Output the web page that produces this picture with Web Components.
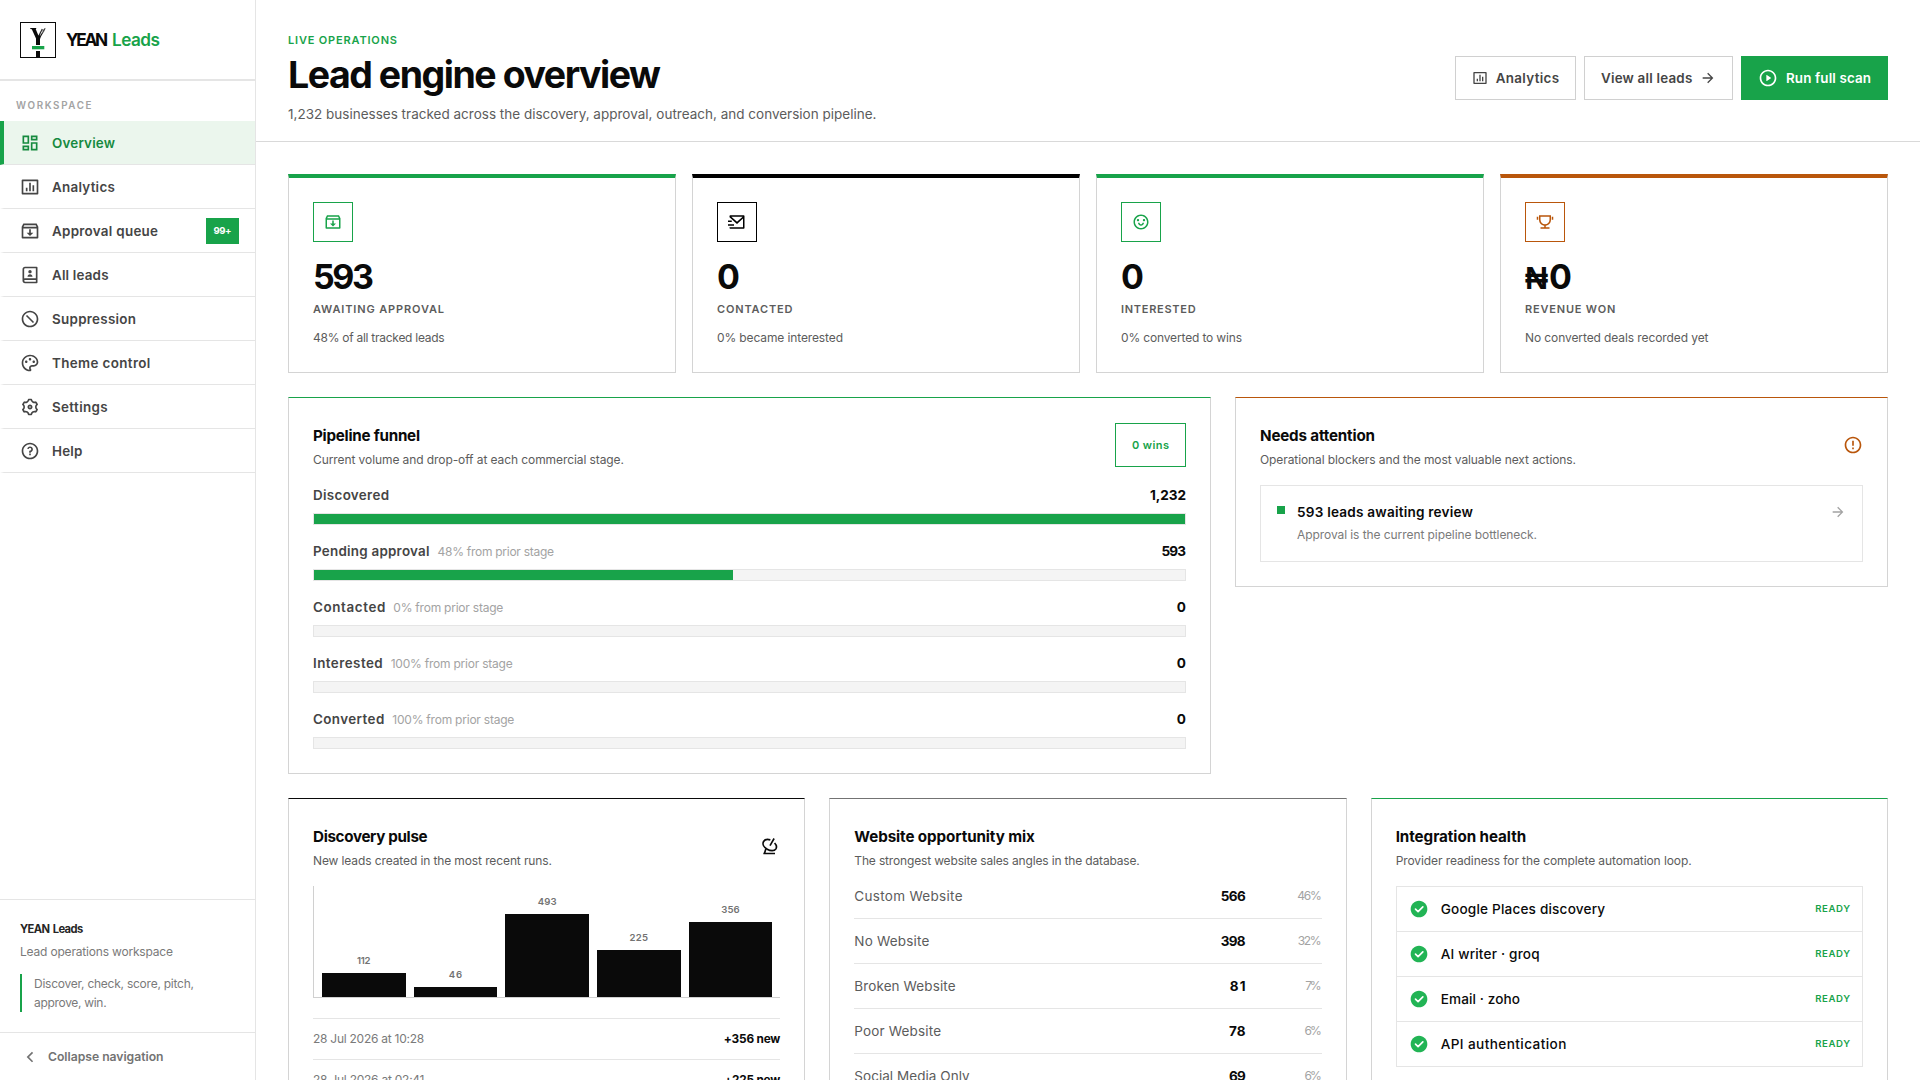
<!DOCTYPE html>
<html lang="en">
<head>
<meta charset="utf-8">
<title>YEAN Leads</title>
<style>
html,body{margin:0;height:1080px;overflow:hidden;background:#fff}
body{font-family:Inter,"Open Sans",sans-serif;color:#0a0a0a;
--green:#18a34a;--ink:#0a0a0a;--line:#e5e5e5;--edge:#d4d4d4;--rust:#b9560b}
.stats{display:grid;grid-template-columns:repeat(4,1fr);gap:16px}
.two{display:grid;grid-template-columns:923fr 653fr;gap:24px;align-items:start}
.three{display:grid;grid-template-columns:repeat(3,minmax(0,1fr));gap:24px}
</style>
</head>
<body>
<app-shell>
  <side-bar slot="side"></side-bar>
  <page-head></page-head>
  <dash-grid>
    <div class="stats">
      <stat-card tone="var(--green)" icon="archive" value="593" vw="60" label="AWAITING APPROVAL" lw="130" note="48% of all tracked leads" nw="130.7"></stat-card>
      <stat-card tone="#000" icon="send" value="0" vw="18.5" label="CONTACTED" lw="74.5" note="0% became interested" nw="125"></stat-card>
      <stat-card tone="var(--green)" icon="smile" value="0" vw="18.5" label="INTERESTED" lw="73.7" note="0% converted to wins" nw="120"></stat-card>
      <stat-card tone="var(--rust)" icon="trophy" value="0" prefix="₦" vw="18.5" label="REVENUE WON" lw="89.3" note="No converted deals recorded yet" nw="182.5"></stat-card>
    </div>
    <div class="two">
      <ui-panel tone="var(--green)" heading="Pipeline funnel" hw="106" sub="Current volume and drop-off at each commercial stage." sw="310">
        <count-badge slot="aside"></count-badge>
        <funnel-row name="Discovered" nw="75" value="1,232" vw="35" fill="100"></funnel-row>
        <funnel-row name="Pending approval" nw="115.5" rate="48% from prior stage" rw="115.5" value="593" vw="23.6" fill="48.1"></funnel-row>
        <funnel-row name="Contacted" nw="71.3" rate="0% from prior stage" rw="109" value="0" vw="8" fill="0"></funnel-row>
        <funnel-row name="Interested" nw="68.7" rate="100% from prior stage" rw="121" value="0" vw="8" fill="0"></funnel-row>
        <funnel-row name="Converted" nw="70.3" rate="100% from prior stage" rw="121" value="0" vw="8" fill="0"></funnel-row>
      </ui-panel>
      <ui-panel tone="var(--rust)" heading="Needs attention" hw="114" sub="Operational blockers and the most valuable next actions." sw="315">
        <ri-icon slot="aside" name="warning" size="20" style="color:var(--rust)"></ri-icon>
        <attention-item></attention-item>
      </ui-panel>
    </div>
    <div class="three">
      <ui-panel tone="#0a0a0a" heading="Discovery pulse" hw="113.6" sub="New leads created in the most recent runs." sw="238">
        <ri-icon slot="aside" name="radar" size="20"></ri-icon>
        <pulse-chart></pulse-chart>
        <run-row when="28 Jul 2026 at 10:28" ww="110.2" count="+356 new" cw="55.5"></run-row>
        <run-row when="28 Jul 2026 at 02:41" ww="110.5" count="+225 new" cw="55"></run-row>
      </ui-panel>
      <ui-panel tone="#737373" heading="Website opportunity mix" hw="179.5" sub="The strongest website sales angles in the database." sw="284.5">
        <mix-row first name="Custom Website" nw="107.2" count="566" cw="24" share="46%" pw="23.5"></mix-row>
        <mix-row name="No Website" nw="74" count="398" cw="24" share="32%" pw="23"></mix-row>
        <mix-row name="Broken Website" nw="100.2" count="81" cw="15" share="7%" pw="15.3"></mix-row>
        <mix-row name="Poor Website" nw="85.7" count="78" cw="15.7" share="6%" pw="16.2"></mix-row>
        <mix-row name="Social Media Only" nw="114.3" count="69" cw="15.8" share="6%" pw="16.2"></mix-row>
      </ui-panel>
      <ui-panel tone="var(--green)" heading="Integration health" hw="129.5" sub="Provider readiness for the complete automation loop." sw="295">
        <health-list></health-list>
      </ui-panel>
    </div>
  </dash-grid>
</app-shell>
<script>
const RING='M12 22C6.47715 22 2 17.5228 2 12C2 6.47715 6.47715 2 12 2C17.5228 2 22 6.47715 22 12C22 17.5228 17.5228 22 12 22ZM12 20C16.4183 20 20 16.4183 20 12C20 7.58172 16.4183 4 12 4C7.58172 4 4 7.58172 4 12C4 16.4183 7.58172 20 12 20Z';
const P=d=>`<path fill="currentColor" d="${d}"/>`;
const ICONS={
dashboard:P('M13 21V11H21V21H13ZM3 13V3H11V13H3ZM9 11V5H5V11H9ZM3 21V15H11V21H3ZM5 19H9V17H5V19ZM15 19H19V13H15V19ZM13 3H21V9H13V3ZM15 5V7H19V5H15Z'),
chart:P('M3 3H21C21.5523 3 22 3.44772 22 4V20C22 20.5523 21.5523 21 21 21H3C2.44772 21 2 20.5523 2 20V4C2 3.44772 2.44772 3 3 3ZM4 5V19H20V5H4ZM7 13H9V17H7V13ZM11 7H13V17H11V7ZM15 10H17V17H15V10Z'),
archive:P('M20 3L22 7V20C22 20.5523 21.5523 21 21 21H3C2.44772 21 2 20.5523 2 20V7.00353L4 3H20ZM20 9H4V19H20V9ZM13 10V14H16L12 18L8 14H11V10H13ZM18.7639 5H5.23656L4.23744 7H19.7639L18.7639 5Z'),
contacts:P('M20 22H6C4.34315 22 3 20.6569 3 19V5C3 3.34315 4.34315 2 6 2H20C20.5523 2 21 2.44772 21 3V21C21 21.5523 20.5523 22 20 22ZM19 20V18H6C5.44772 18 5 18.4477 5 19C5 19.5523 5.44772 20 6 20H19ZM5 16.1707C5.31278 16.0602 5.64936 16 6 16H19V4H6C5.44772 4 5 4.44772 5 5V16.1707ZM12 10C10.8954 10 10 9.10457 10 8C10 6.89543 10.8954 6 12 6C13.1046 6 14 6.89543 14 8C14 9.10457 13.1046 10 12 10ZM9 14C9 12.3431 10.3431 11 12 11C13.6569 11 15 12.3431 15 14H9Z'),
forbid:P(RING)+'<path d="M7.8 7.8L16.2 16.2" stroke="currentColor" stroke-width="2"/>',
palette:P('M12 2C17.5222 2 22 5.97778 22 10.8889C22 13.9556 19.5111 16.4444 16.4444 16.4444H14.4778C13.5556 16.4444 12.8111 17.1889 12.8111 18.1111C12.8111 18.5333 12.9778 18.9222 13.2333 19.2111C13.5 19.5111 13.6667 19.9 13.6667 20.3333C13.6667 21.2556 12.9 22 12 22C6.47778 22 2 17.5222 2 12C2 6.47778 6.47778 2 12 2ZM10.8111 18.1111C10.8111 16.0843 12.451 14.4444 14.4778 14.4444H16.4444C18.4065 14.4444 20 12.851 20 10.8889C20 7.1392 16.4677 4 12 4C7.58235 4 4 7.58235 4 12C4 16.19 7.2226 19.6285 11.324 19.9718C10.9948 19.4168 10.8111 18.7761 10.8111 18.1111ZM7.5 12C6.67157 12 6 11.3284 6 10.5C6 9.67157 6.67157 9 7.5 9C8.32843 9 9 9.67157 9 10.5C9 11.3284 8.32843 12 7.5 12ZM16.5 12C15.6716 12 15 11.3284 15 10.5C15 9.67157 15.6716 9 16.5 9C17.3284 9 18 9.67157 18 10.5C18 11.3284 17.3284 12 16.5 12ZM12 9C11.1716 9 10.5 8.32843 10.5 7.5C10.5 6.67157 11.1716 6 12 6C12.8284 6 13.5 6.67157 13.5 7.5C13.5 8.32843 12.8284 9 12 9Z'),
gear:P('M3.33946 17.0002C2.90721 16.2515 2.58277 15.4702 2.36133 14.6741C3.3338 14.1779 3.99972 13.1668 3.99972 12.0002C3.99972 10.8345 3.3348 9.824 2.36353 9.32741C2.81025 7.71651 3.65857 6.21627 4.86474 4.99001C5.7807 5.58416 6.98935 5.65534 7.99972 5.072C9.01009 4.48866 9.55277 3.40635 9.4962 2.31604C11.1613 1.8846 12.8847 1.90004 14.5031 2.31862C14.4475 3.40806 14.9901 4.48912 15.9997 5.072C17.0101 5.65532 18.2187 5.58416 19.1346 4.99007C19.7133 5.57986 20.2277 6.25151 20.66 7.00021C21.0922 7.7489 21.4167 8.53025 21.6381 9.32628C20.6656 9.82247 19.9997 10.8336 19.9997 12.0002C19.9997 13.166 20.6646 14.1764 21.6359 14.673C21.1892 16.2839 20.3409 17.7841 19.1347 19.0104C18.2187 18.4163 17.0101 18.3451 15.9997 18.9284C14.9893 19.5117 14.4467 20.5941 14.5032 21.6844C12.8382 22.1158 11.1148 22.1004 9.49633 21.6818C9.55191 20.5923 9.00929 19.5113 7.99972 18.9284C6.98938 18.3451 5.78079 18.4162 4.86484 19.0103C4.28617 18.4205 3.77172 17.7489 3.33946 17.0002ZM8.99972 17.1964C10.0911 17.8265 10.8749 18.8227 11.2503 19.9659C11.7486 20.0133 12.2502 20.014 12.7486 19.9675C13.1238 18.8237 13.9078 17.8268 14.9997 17.1964C16.0916 16.5659 17.347 16.3855 18.5252 16.6324C18.8146 16.224 19.0648 15.7892 19.2729 15.334C18.4706 14.4373 17.9997 13.2604 17.9997 12.0002C17.9997 10.74 18.4706 9.5632 19.2729 8.6665C19.1688 8.4405 19.0538 8.21822 18.9279 8.00021C18.802 7.78219 18.667 7.57148 18.5233 7.36842C17.3457 7.61476 16.0911 7.43414 14.9997 6.80405C13.9083 6.17395 13.1246 5.17768 12.7491 4.03455C12.2509 3.98714 11.7492 3.98646 11.2509 4.03292C10.8756 5.17671 10.0916 6.17364 8.99972 6.80405C7.9078 7.43447 6.65245 7.61494 5.47428 7.36803C5.18485 7.77641 4.93463 8.21117 4.72656 8.66637C5.52881 9.56311 5.99972 10.74 5.99972 12.0002C5.99972 13.2604 5.52883 14.4372 4.72656 15.3339C4.83067 15.5599 4.94564 15.7822 5.07152 16.0002C5.19739 16.2182 5.3324 16.4289 5.47612 16.632C6.65377 16.3857 7.90838 16.5663 8.99972 17.1964ZM11.9997 15.0002C10.3429 15.0002 8.99972 13.6571 8.99972 12.0002C8.99972 10.3434 10.3429 9.00021 11.9997 9.00021C13.6566 9.00021 14.9997 10.3434 14.9997 12.0002C14.9997 13.6571 13.6566 15.0002 11.9997 15.0002ZM11.9997 13.0002C12.552 13.0002 12.9997 12.5525 12.9997 12.0002C12.9997 11.4479 12.552 11.0002 11.9997 11.0002C11.4474 11.0002 10.9997 11.4479 10.9997 12.0002C10.9997 12.5525 11.4474 13.0002 11.9997 13.0002Z'),
help:P(RING+'M11 15H13V17H11V15ZM13 13.3551V14H11V12.5C11 11.9477 11.4477 11.5 12 11.5C12.8284 11.5 13.5 10.8284 13.5 10C13.5 9.17157 12.8284 8.5 12 8.5C11.2723 8.5 10.6656 9.01823 10.5288 9.70577L8.56731 9.31346C8.88637 7.70919 10.302 6.5 12 6.5C13.933 6.5 15.5 8.067 15.5 10C15.5 11.5855 14.4457 12.9248 13 13.3551Z'),
right:P('M16.1716 10.9999L10.8076 5.63589L12.2218 4.22168L20 11.9999L12.2218 19.778L10.8076 18.3638L16.1716 12.9999H4V10.9999H16.1716Z'),
back:P('M10.8284 12.0007L15.7782 16.9504L14.364 18.3646L8 12.0007L14.364 5.63672L15.7782 7.05093L10.8284 12.0007Z'),
play:P(RING+'M10.6219 8.41459L15.5008 11.6672C15.6846 11.7897 15.7343 12.0381 15.6117 12.2219C15.5824 12.2658 15.5447 12.3035 15.5008 12.3328L10.6219 15.5854C10.4381 15.708 10.1897 15.6583 10.0672 15.4745C10.0234 15.4088 10 15.3316 10 15.2526V8.74741C10 8.52649 10.1791 8.34741 10.4 8.34741C10.479 8.34741 10.5562 8.37078 10.6219 8.41459Z'),
send:P('M22 20.0066C22 20.5552 21.5447 21 21.0082 21H2.9918C2.44405 21 2 20.5551 2 20.0066V19H20V7.3L12 14.5L2 5.5V4C2 3.44772 2.44772 3 3 3H21C21.5523 3 22 3.44772 22 4V20.0066ZM4.43414 5L12 11.8091L19.5659 5H4.43414ZM0 15H8V17H0V15ZM0 10H5V12H0V10Z'),
smile:P(RING+'M8 13H10C10 14.1046 10.8954 15 12 15C13.1046 15 14 14.1046 14 13H16C16 15.2091 14.2091 17 12 17C9.79086 17 8 15.2091 8 13ZM8 11C7.17157 11 6.5 10.3284 6.5 9.5C6.5 8.67157 7.17157 8 8 8C8.82843 8 9.5 8.67157 9.5 9.5C9.5 10.3284 8.82843 11 8 11ZM16 11C15.1716 11 14.5 10.3284 14.5 9.5C14.5 8.67157 15.1716 8 16 8C16.8284 8 17.5 8.67157 17.5 9.5C17.5 10.3284 16.8284 11 16 11Z'),
trophy:P('M13.0049 16.9409V19.0027H18.0049V21.0027H6.00488V19.0027H11.0049V16.9409C7.05857 16.4488 4.00488 13.0824 4.00488 9.00275V3.00275H20.0049V9.00275C20.0049 13.0824 16.9512 16.4488 13.0049 16.9409ZM6.00488 5.00275V9.00275C6.00488 12.3165 8.69117 15.0027 12.0049 15.0027C15.3186 15.0027 18.0049 12.3165 18.0049 9.00275V5.00275H6.00488ZM1.00488 5.00275H3.00488V9.00275H1.00488V5.00275ZM21.0049 5.00275H23.0049V9.00275H21.0049V5.00275Z'),
warning:P(RING+'M11 15H13V17H11V15ZM11 7H13V13H11V7Z'),
check:P('M12 22C6.47715 22 2 17.5228 2 12C2 6.47715 6.47715 2 12 2C17.5228 2 22 6.47715 22 12C22 17.5228 17.5228 22 12 22Z')+'<path d="M7.8 12.2L10.9 15.1L16.6 9.5" fill="none" stroke="#fff" stroke-width="2" stroke-linecap="round" stroke-linejoin="round"/>',
radar:'<g fill="none" stroke="currentColor" stroke-width="2"><path d="M12.4 4.7C9 3.700 5.700 4.300 4.300 6.600C2.500 9.800 4.700 13.600 8.600 15.900C12.600 18.200 17.300 18.400 19.100 15.400C20.400 13.100 19.600 10.500 17.500 8.400"/><path d="M12 11.500L16.900 3"/><path d="M7 15.500L5.400 20.800M4 21H18"/></g>'
};
const define=(tag,render,after)=>customElements.define(tag,class extends HTMLElement{
  connectedCallback(){
    if(this.shadowRoot)return;
    const a=k=>this.getAttribute(k)??'';
    this.attachShadow({mode:'open'}).innerHTML=render(a,this);
    if(after)after(this);
  }
});
const T=(text,w,cls='')=>`<fit-text class="${cls}" w="${w}">${text}</fit-text>`;

define('ri-icon',a=>`<style>:host{display:block;flex:none;width:${a('size')}px;height:${a('size')}px}svg{display:block;width:100%;height:100%}</style><svg viewBox="0 0 24 24">${ICONS[a('name')]}</svg>`);

define('app-shell',()=>`<style>:host{display:grid;grid-template-columns:256px minmax(0,1fr);height:1080px;overflow:hidden}main{min-width:0;overflow:hidden}</style><slot name="side"></slot><main><slot></slot></main>`);

define('brand-mark',()=>`<style>:host{display:block;box-sizing:border-box;width:36px;height:36px;border:1px solid #0a0a0a}svg{display:block}</style>
<svg width="34" height="34" viewBox="0 0 34 34"><path d="M9.300 5H15.200V6H14.700L17.400 12.500L18.500 11.500L20 13.500L19 16V22H15V15.500L10.800 6.200L9.300 6Z" fill="#0a0a0a"/><path d="M17.900 12.800L21.300 6M19.400 13.500L24 5.500" stroke="#111" stroke-width="1.100" fill="none"/><path d="M18.800 9.200L24.500 5.400M18.600 12L23.500 8" stroke="#777" stroke-width=".7" fill="none"/><path d="M11 23H23.300V26.300H11Z" fill="#18a34a"/><path d="M15 28H19V34H15Z" fill="#0a0a0a"/></svg>`);

define('nav-item',(a,el)=>`<style>:host{box-sizing:border-box;display:flex;align-items:center;height:44px;padding:0 16px;gap:12px;border-left:4px solid transparent;border-bottom:1px solid var(--line);color:#454545;font-size:13.400px;font-weight:600;line-height:20px}
:host([active]){background:#ebf6ed;border-left-color:var(--green);color:#168a3f}
.l{flex:1;padding-top:1px}.b{box-sizing:border-box;width:33px;height:26px;background:var(--green);color:#fff;font-size:9.600px;font-weight:700;line-height:26px;text-align:center}</style>
<ri-icon name="${a('icon')}" size="20"></ri-icon><span class="l">${T(a('label'),a('w'))}</span>${a('badge')?`<span class="b">${T(a('badge'),17)}</span>`:''}`);

define('side-bar',()=>`<style>:host{box-sizing:border-box;display:flex;flex-direction:column;height:1080px;border-right:1px solid var(--line);background:#fff}
header{box-sizing:border-box;height:81px;padding:22px 20px 0;border-bottom:2px solid var(--line);display:flex;gap:10px}
.name{display:flex;gap:4px;font-size:17.200px;font-weight:700;line-height:36px}.name b{color:var(--green);font-weight:600}
.ws{height:15px;padding:17px 16px 8px;color:#a3a3a3;font-size:9.800px;font-weight:600;line-height:15px}
nav{flex:1}
.foot{box-sizing:border-box;height:133px;border-top:1px solid var(--line);padding:20px 20px 0;color:#7a7a7a;font-size:12px}
.foot strong{display:block;color:#262626;font-size:11.200px;font-weight:700;line-height:18px;word-spacing:1px}
.foot p{margin:5px 0 0;line-height:18px}
.foot blockquote{margin:13px 0 0;border-left:2px solid var(--green);padding-left:12px;line-height:19px;height:38px}
.col{box-sizing:border-box;height:48px;border-top:1px solid var(--line);display:flex;align-items:center;gap:8px;padding:0 20px;color:#737373;font-size:12.200px;font-weight:600}</style>
<header><brand-mark></brand-mark><div class="name">${T('YEAN',41)}<b>${T('Leads',47)}</b></div></header>
<div class="ws">${T('WORKSPACE',74.500)}</div>
<nav>${[['dashboard','Overview',62,'',1],['chart','Analytics',61.800],['archive','Approval queue',105,'99+'],['contacts','All leads',55.500],['forbid','Suppression',83],['palette','Theme control',97.300],['gear','Settings',54.700],['help','Help',29.300]].map(n=>`<nav-item icon="${n[0]}" label="${n[1]}" w="${n[2]}" badge="${n[3]||''}" ${n[4]?'active':''}></nav-item>`).join('')}</nav>
<div class="foot"><strong>${T('YEAN Leads',62.300)}</strong><p>${T('Lead operations workspace',152)}</p><blockquote>${T('Discover, check, score, pitch,',159)}<br>${T('approve, win.',71.600)}</blockquote></div>
<div class="col"><ri-icon name="back" size="20"></ri-icon>${T('Collapse navigation',114.500)}</div>`);

define('ui-button',(a,el)=>`<style>:host{box-sizing:border-box;width:${a('width')}px;height:44px;padding:0 16px;display:flex;align-items:center;justify-content:space-between;border:1px solid #d0d0d0;background:#fff;color:#454545;font-size:13.400px;font-weight:600}
:host([primary]){background:var(--green);border-color:var(--green);color:#fff}</style><slot></slot>`);

define('page-head',()=>`<style>:host{box-sizing:border-box;display:flex;justify-content:space-between;align-items:center;height:142px;padding:32px 32px 17px;border-bottom:1px solid #d9d9d9}
.eye{color:var(--green);font-size:11px;font-weight:600;line-height:16px}
h1{margin:5px 0 0;font-size:37.500px;font-weight:700;line-height:44px;white-space:nowrap}
p{margin:7px 0 0;color:#5c5c5c;font-size:13.500px;line-height:20px}
.act{display:flex;gap:8px}</style>
<div><div class="eye">${T('LIVE OPERATIONS',108)}</div><h1>${T('Lead engine overview',372)}</h1><p>${T('1,232 businesses tracked across the discovery, approval, outreach, and conversion pipeline.',587.500)}</p></div>
<div class="act"><ui-button width="121"><ri-icon name="chart" size="16"></ri-icon>${T('Analytics',62.300)}</ui-button><ui-button width="149">${T('View all leads',90.300)}<ri-icon name="right" size="16"></ri-icon></ui-button><ui-button width="147" primary><ri-icon name="play" size="20"></ri-icon>${T('Run full scan',84)}</ui-button></div>`);

define('dash-grid',()=>`<style>:host{display:flex;flex-direction:column;gap:24px;padding:32px}</style><slot></slot>`);

define('stat-card',a=>`<style>:host{box-sizing:border-box;display:block;height:199px;padding:24px;border:1px solid var(--edge);border-top:4px solid ${a('tone')};background:#fff}
.i{box-sizing:border-box;width:40px;height:40px;border:1px solid ${a('tone')};color:${a('tone')};display:grid;place-items:center}
.v{display:flex;align-items:baseline;gap:1px;margin-top:17px;font-size:34px;font-weight:700;line-height:36px;height:36px}.p{font-size:32px;font-weight:800;font-family:"Liberation Sans",sans-serif}.l{margin-top:5px;font-size:11px;font-weight:600;line-height:18px;color:#5c5c5c}.n{margin-top:9px;font-size:12px;line-height:21px;color:#5c5c5c}</style>
<div class="i"><ri-icon name="${a('icon')}" size="18"></ri-icon></div><div class="v">${a('prefix')?`<span class="p">${a('prefix')}</span>`:''}${T(a('value'),a('vw'))}</div><div class="l">${T(a('label'),a('lw'))}</div><div class="n">${T(a('note'),a('nw'))}</div>`);

define('ui-panel',a=>`<style>:host{box-sizing:border-box;display:block;padding:24px;border:1px solid var(--edge);border-top-color:${a('tone')};background:#fff}
header{display:flex;justify-content:space-between;align-items:center;height:46px;margin-bottom:17px}
.t{align-self:flex-start}h2{margin:0;font-size:15.200px;font-weight:700;line-height:27px}p{margin:1px 0 0;font-size:12px;line-height:20px;color:#5c5c5c}</style>
<header><div class="t"><h2>${T(a('heading'),a('hw'))}</h2><p>${T(a('sub'),a('sw'))}</p></div><slot name="aside"></slot></header><slot></slot>`);

define('count-badge',()=>`<style>:host{box-sizing:border-box;display:block;width:71px;height:44px;border:1px solid var(--green);color:var(--green);font-size:11px;font-weight:600;line-height:42px;text-align:center}</style>${T('0 wins',36)}`);

define('funnel-row',a=>`<style>:host{display:block}:host(:not(:last-of-type)){margin-bottom:16px}
.r{display:flex;gap:8px;height:20px;line-height:21px;margin-bottom:8px;font-size:13.400px;font-weight:600;color:#454545}.s{flex:1;font-size:12px;font-weight:400;color:#a3a3a3}.v{color:#0a0a0a;font-weight:700;font-size:13.600px}
.b{box-sizing:border-box;height:12px;border:1px solid var(--line);background:#f4f4f4}.f{height:10px;width:${a('fill')}%;background:var(--green)}</style>
<div class="r">${T(a('name'),a('nw'))}<span class="s">${a('rate')?T(a('rate'),a('rw')):''}</span>${T(a('value'),a('vw'),'v')}</div><div class="b"><div class="f"></div></div>`);

define('attention-item',()=>`<style>:host{box-sizing:border-box;display:flex;gap:12px;height:77px;padding:16px;border:1px solid var(--line)}
i{flex:none;width:8px;height:8px;margin-top:4px;background:var(--green)}.c{flex:1}.a{font-size:13.600px;font-weight:600;line-height:22px;margin-top:-1px}.b{font-size:12px;line-height:20px;margin-top:2px;color:#7a7a7a}ri-icon{color:#a3a3a3;margin-top:2px}</style>
<i></i><div class="c"><div class="a">${T('593 leads awaiting review',175)}</div><div class="b">${T('Approval is the current pipeline bottleneck.',239)}</div></div><ri-icon name="right" size="16"></ri-icon>`);

define('pulse-chart',()=>`<style>:host{box-sizing:border-box;display:flex;align-items:flex-end;gap:8px;height:112px;padding:0 8px;margin-bottom:20px;border-left:1px solid #d0d0d0;border-bottom:1px solid #d0d0d0}
div{flex:1;display:flex;flex-direction:column;align-items:center;gap:6px;font-size:9.600px;font-weight:600;line-height:12px;color:#737373}i{width:100%;background:#0a0a0a}</style>
${[[112,24,12.500],[46,10,12.500],[493,83,18],[225,47,17.500],[356,75,17.500]].map(b=>`<div>${T(b[0],b[2])}<i style="height:${b[1]}px"></i></div>`).join('')}`);

define('run-row',a=>`<style>:host{box-sizing:border-box;display:flex;justify-content:space-between;height:41px;border-top:1px solid var(--line);line-height:40px;font-size:12px;color:#7a7a7a}.c{color:#0a0a0a;font-weight:700;font-size:11.800px}</style>${T(a('when'),a('ww'))}${T(a('count'),a('cw'),'c')}`);

define('mix-row',(a,el)=>`<style>:host{box-sizing:border-box;display:grid;grid-template-columns:1fr 60px 60px;column-gap:16px;height:45px;padding:12px 0;border-bottom:1px solid var(--line);line-height:21px;font-size:13.500px;color:#5c5c5c}
:host([first]){height:33px;padding-top:0}.c{text-align:right;color:#0a0a0a;font-weight:700}.p{text-align:right;font-size:12px;line-height:20px;color:#a3a3a3}</style>
<span>${T(a('name'),a('nw'))}</span><span class="c">${T(a('count'),a('cw'))}</span><span class="p">${T(a('share'),a('pw'))}</span>`);

define('health-list',()=>`<style>:host{display:block;border:1px solid var(--line);margin-bottom:24px}
div{box-sizing:border-box;height:45px;padding:0 12px;display:flex;align-items:center;gap:12px;border-bottom:1px solid var(--line);font-size:13.600px;font-weight:500}div:last-child{height:44px;border:0}
ri-icon{color:#22b455}.n{flex:1}.s{font-size:9.600px;font-weight:600;color:var(--green);margin-top:-1px}</style>
${[['Google Places discovery',163.500],['AI writer · groq',98],['Email · zoho',78.300],['API authentication',124.700]].map(r=>`<div><ri-icon name="check" size="20"></ri-icon><span class="n">${T(r[0],r[1])}</span>${T('READY',33.700,'s')}</div>`).join('')}`);

/* Tracks a single line of text so that it fills the width given in w. */
define('fit-text',()=>`<style>:host{display:inline-block;white-space:nowrap}</style><slot></slot>`,el=>{
  const n=[...el.textContent].length,natural=el.getBoundingClientRect().width;
  if(n<2)return;
  const s=(parseFloat(el.getAttribute('w'))+1-natural)/(n-1);
  el.style.letterSpacing=s+'px';
  el.style.marginRight=-s+'px';
});
</script>
</body>
</html>
